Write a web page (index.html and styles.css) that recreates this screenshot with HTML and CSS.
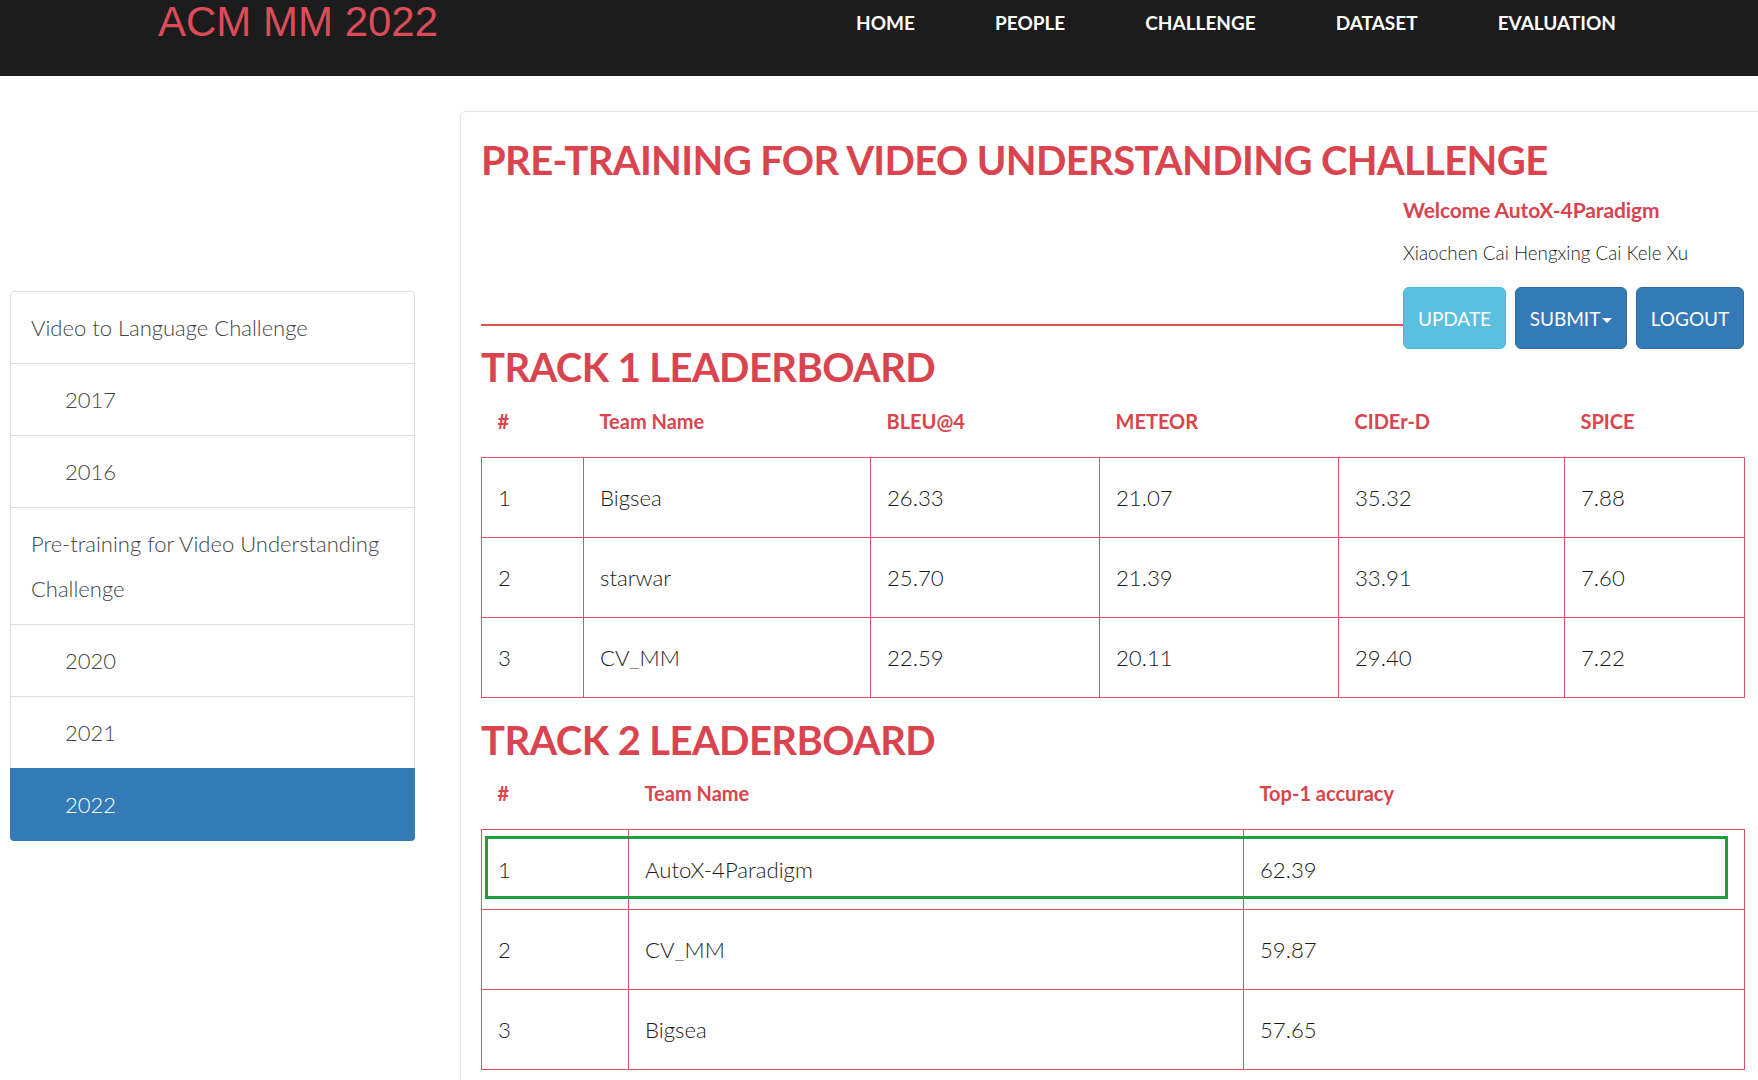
FILE: index.html
```html
<!DOCTYPE html>
<html lang="en">
<head>
<meta charset="utf-8">
<title>ACM MM 2022 - Pre-training for Video Understanding Challenge</title>
<link rel="stylesheet" href="styles.css">
</head>
<body>
<header class="navbar">
  <div class="brand">ACM MM 2022</div>
  <ul class="menu">
    <li><a href="#">HOME</a></li>
    <li><a href="#">PEOPLE</a></li>
    <li><a href="#">CHALLENGE</a></li>
    <li><a href="#">DATASET</a></li>
    <li><a href="#">EVALUATION</a></li>
  </ul>
</header>
<div class="page">
  <aside class="sidebar">
    <ul class="list-group">
      <li class="item group">Video to Language Challenge</li>
      <li class="item year">2017</li>
      <li class="item year">2016</li>
      <li class="item group">Pre-training for Video Understanding Challenge</li>
      <li class="item year">2020</li>
      <li class="item year">2021</li>
      <li class="item year active">2022</li>
    </ul>
  </aside>
  <main class="card">
    <h1 class="title">PRE-TRAINING FOR VIDEO UNDERSTANDING CHALLENGE</h1>
    <div class="user">
      <div class="welcome">Welcome AutoX-4Paradigm</div>
      <div class="members">Xiaochen Cai Hengxing Cai Kele Xu</div>
    </div>
    <div class="toolbar">
      <div class="rule"></div>
      <div class="buttons">
        <button class="btn btn-info">UPDATE</button>
        <button class="btn btn-primary btn-submit">SUBMIT<span class="caret"></span></button>
        <button class="btn btn-primary btn-logout">LOGOUT</button>
      </div>
    </div>

    <h2 class="track">TRACK 1 LEADERBOARD</h2>
    <div class="board-wrap">
      <table class="board">
        <colgroup>
          <col class="c1-rank"><col class="c1-team"><col class="c1-bleu"><col class="c1-meteor"><col class="c1-cider"><col class="c1-spice">
        </colgroup>
        <thead>
          <tr><th>#</th><th>Team Name</th><th>BLEU@4</th><th>METEOR</th><th>CIDEr-D</th><th>SPICE</th></tr>
        </thead>
        <tbody>
          <tr><td>1</td><td>Bigsea</td><td>26.33</td><td>21.07</td><td>35.32</td><td>7.88</td></tr>
          <tr><td>2</td><td>starwar</td><td>25.70</td><td>21.39</td><td>33.91</td><td>7.60</td></tr>
          <tr><td>3</td><td>CV_MM</td><td>22.59</td><td>20.11</td><td>29.40</td><td>7.22</td></tr>
        </tbody>
      </table>
    </div>

    <h2 class="track track-2">TRACK 2 LEADERBOARD</h2>
    <div class="board-wrap">
      <table class="board">
        <colgroup>
          <col class="c2-rank"><col class="c2-team"><col class="c2-acc">
        </colgroup>
        <thead>
          <tr><th>#</th><th>Team Name</th><th>Top-1 accuracy</th></tr>
        </thead>
        <tbody>
          <tr><td>1</td><td>AutoX-4Paradigm</td><td>62.39</td></tr>
          <tr><td>2</td><td>CV_MM</td><td>59.87</td></tr>
          <tr><td>3</td><td>Bigsea</td><td>57.65</td></tr>
        </tbody>
      </table>
      <div class="highlight"></div>
    </div>
  </main>
</div>
</body>
</html>
```
FILE: styles.css
```css
* { box-sizing: border-box; }

html, body {
  margin: 0;
  padding: 0;
  overflow: hidden;
  background: #ffffff;
}

body {
  font-family: Lato, "Open Sans", "Liberation Sans", sans-serif;
  color: #333333;
}

/* ---------- top navbar ---------- */
.navbar {
  display: flex;
  align-items: flex-start;
  height: 76px;
  background: #1c1c1c;
}

.brand {
  margin-left: 158px;
  font-family: "Liberation Sans", Arial, sans-serif;
  font-size: 42px;
  line-height: 44px;
  color: #dc4c58;
}

.menu {
  display: flex;
  list-style: none;
  margin: 0 102px 0 auto;
  padding: 11px 0 0 0;
}

.menu a {
  display: block;
  padding: 0 40px;
  font-size: 19px;
  line-height: 24px;
  font-weight: 700;
  color: #ffffff;
  text-decoration: none;
}

/* ---------- page layout ---------- */
.page {
  display: flex;
  align-items: flex-start;
}

.sidebar {
  width: 405px;
  margin: 215px 0 0 10px;
  flex: none;
}

.list-group {
  list-style: none;
  margin: 0;
  padding: 0;
  border: 1px solid #dddddd;
  border-radius: 4px;
}

.item {
  padding: 13px 10px 13px 20px;
  font-size: 22px;
  line-height: 45px;
  font-weight: 300;
  color: #444444;
  border-top: 1px solid #dddddd;
  background: #ffffff;
}

.item:first-child {
  border-top: none;
  border-radius: 4px 4px 0 0;
}

.item.year {
  padding-left: 54px;
}

.item.active {
  background: #337ab7;
  color: #ffffff;
  border-top-color: #337ab7;
  border-radius: 0 0 4px 4px;
  margin: 0 -1px -1px -1px;
  padding-left: 55px;
  padding-bottom: 14px;
}

/* ---------- main card ---------- */
.card {
  width: 1305px;
  flex: none;
  margin: 35px 0 0 45px;
  padding: 24px 20px 40px 20px;
  border: 1px solid #e4e4e4;
  border-radius: 6px;
  box-shadow: 0 1px 3px rgba(0, 0, 0, 0.05);
  min-height: 1000px;
}

.title {
  margin: 0;
  font-size: 40px;
  line-height: 48px;
  font-weight: 700;
  letter-spacing: -0.65px;
  color: #d9444f;
  white-space: nowrap;
}

.user {
  width: 341px;
  margin: 12px 0 0 auto;
}

.welcome {
  font-size: 21px;
  line-height: 28px;
  font-weight: 700;
  letter-spacing: -0.1px;
  color: #d9444f;
}

.members {
  margin-top: 15px;
  font-size: 18.8px;
  line-height: 28px;
  font-weight: 300;
  color: #1e1e1e;
  white-space: nowrap;
}

.toolbar {
  display: flex;
  align-items: center;
  margin-top: 20px;
}

.rule {
  flex: 1;
  height: 2px;
  margin-top: 14px;
  background: #d9534f;
}

.buttons {
  display: flex;
  gap: 9px;
}

.btn {
  height: 62px;
  padding: 0 10px;
  border: 1px solid transparent;
  border-radius: 6px;
  font-family: Lato, "Open Sans", sans-serif;
  font-size: 19px;
  color: #ffffff;
  white-space: nowrap;
  cursor: pointer;
}

.btn-info {
  width: 103px;
  background: #5bc0de;
  border-color: #46b8da;
}

.btn-primary {
  background: #337ab7;
  border-color: #2e6da4;
}

.btn-submit { width: 112px; }
.btn-logout { width: 108px; }

.caret {
  display: inline-block;
  width: 0;
  height: 0;
  margin-left: 2px;
  vertical-align: middle;
  border-top: 5px solid #ffffff;
  border-left: 5px solid transparent;
  border-right: 5px solid transparent;
}

/* ---------- leaderboards ---------- */
.track {
  margin: 0;
  font-size: 40px;
  line-height: 36px;
  font-weight: 700;
  letter-spacing: -0.6px;
  color: #d9444f;
}

.track-2 {
  margin-top: 24px;
}

.board-wrap {
  position: relative;
}

.board {
  width: 1263px;
  table-layout: fixed;
  border-collapse: collapse;
}

.board th {
  height: 72px;
  padding: 0 16px;
  text-align: left;
  vertical-align: middle;
  font-size: 20px;
  font-weight: 700;
  color: #d9444f;
}

.board tbody tr {
  height: 80px;
}

.board td {
  padding: 0 16px;
  vertical-align: middle;
  font-size: 22.2px;
  font-weight: 300;
  color: #1a1a1a;
  border: 1px solid #d9535e;
}

.c1-rank { width: 102px; }
.c1-team { width: 287px; }
.c1-bleu { width: 229px; }
.c1-meteor { width: 239px; }
.c1-cider { width: 226px; }
.c1-spice { width: 180px; }

.c2-rank { width: 147px; }
.c2-team { width: 615px; }
.c2-acc { width: 501px; }

.highlight {
  position: absolute;
  left: 4px;
  top: 78px;
  width: 1243px;
  height: 63px;
  border: 3px solid #1f9e3e;
  pointer-events: none;
}
```
